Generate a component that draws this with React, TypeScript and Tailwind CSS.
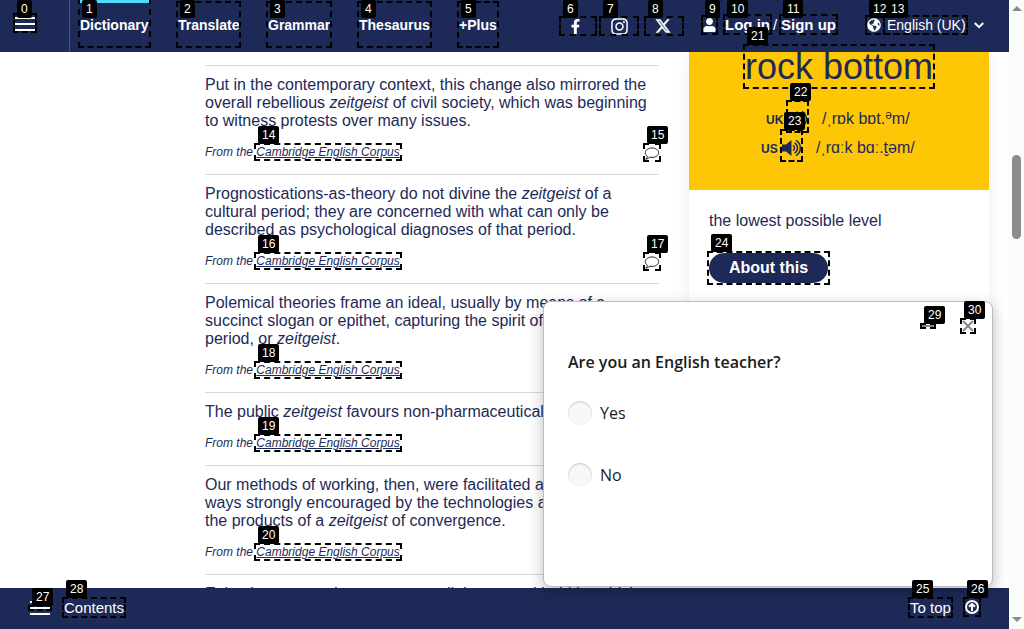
import React from "react";
import { FaFacebookF, FaGlobeAmericas, FaInstagram, FaUser } from "react-icons/fa";
import { FaXTwitter } from "react-icons/fa6";

const Z = () => <i>zeitgeist</i>;

const examples: { lines: React.ReactNode[]; comment?: boolean }[] = [
  {
    lines: [
      "Put in the contemporary context, this change also mirrored the",
      <>overall rebellious <Z /> of civil society, which was beginning</>,
      "to witness protests over many issues.",
    ],
    comment: true,
  },
  {
    lines: [
      <>Prognostications-as-theory do not divine the <Z /> of a</>,
      "cultural period; they are concerned with what can only be",
      "described as psychological diagnoses of that period.",
    ],
    comment: true,
  },
  {
    lines: [
      "Polemical theories frame an ideal, usually by means of a",
      "succinct slogan or epithet, capturing the spirit of the",
      <>period, or <Z />.</>,
    ],
  },
  { lines: [<>The public <Z /> favours non-pharmaceutical</>] },
  {
    lines: [
      "Our methods of working, then, were facilitated and in some",
      "ways strongly encouraged by the technologies and",
      <>the products of a <Z /> of convergence.</>,
    ],
  },
  { lines: ["Episodes are used as a means to link past and held by which"] },
];

// [label, x, y, width, height, label y]
const markers: [string, number, number, number, number, number][] = [
  ["0", 13, 13, 24, 20, 0],
  ["1", 78, -2, 73, 50, 0],
  ["2", 176, 1, 65, 47, 0],
  ["3", 266, 1, 66, 47, 0],
  ["4", 357, 1, 75, 47, 0],
  ["5", 457, 1, 42, 47, 0],
  ["6", 559, 16, 38, 20, 0],
  ["7", 599, 16, 40, 20, 0],
  ["8", 644, 16, 40, 20, 0],
  ["9", 701, 15, 17, 20, 0],
  ["10", 723, 14, 49, 21, 0],
  ["11", 779, 14, 59, 21, 0],
  ["12", 865, 15, 103, 20, 0],
  ["13", 883, 15, 85, 20, 0],
  ["14", 254, 143, 148, 18, 126],
  ["15", 643, 143, 18, 19, 126],
  ["16", 254, 252, 148, 18, 235],
  ["17", 643, 252, 18, 19, 235],
  ["18", 254, 361, 148, 18, 344],
  ["19", 254, 434, 148, 18, 417],
  ["20", 254, 543, 148, 18, 526],
  ["21", 743, 44, 192, 45, 27],
  ["22", 786, 100, 23, 33, 83],
  ["23", 780, 129, 23, 33, 112],
  ["24", 707, 251, 123, 34, 234],
  ["25", 908, 597, 45, 21, 580],
  ["26", 963, 597, 18, 20, 580],
  ["27", 28, 605, 24, 6, 588],
  ["28", 62, 597, 64, 21, 580],
  ["29", 920, 323, 16, 6, 306],
  ["30", 960, 318, 16, 16, 301],
];

function Speaker() {
  return (
    <svg width="20" height="18" viewBox="0 0 20 18" fill="none" stroke="#1d2a57" strokeWidth="1.5">
      <path d="M0 5.500h4L9.500 1v16L4 12.500H0z" fill="#1d2a57" stroke="none" />
      <path d="M11 6.300a3.200 3.200 0 0 1 0 5.400M12.500 3.800a6 6 0 0 1 0 10.400M14 1.300a9 9 0 0 1 0 15.400" />
    </svg>
  );
}

function Bubble() {
  return (
    <svg width="16" height="14" viewBox="0 0 16 14" fill="white" stroke="#222" strokeWidth="1">
      <path d="M8 2c3.800 0 6.700 2.100 6.700 4.700S11.800 11.400 8 11.400c-.9 0-1.700-.1-2.500-.3C4.600 12.300 3.400 13 1.800 13.200c.9-.9 1.500-1.800 1.600-2.900C2.100 9.500 1.300 8.200 1.300 6.700 1.300 4.100 4.200 2 8 2z" />
    </svg>
  );
}

function Bars({ className }: { className: string }) {
  return (
    <span className={`flex flex-col gap-1 ${className}`}>
      <span className="h-[2px] w-5 bg-white" />
      <span className="h-[2px] w-5 bg-white" />
      <span className="h-[2px] w-5 bg-white" />
    </span>
  );
}

function Header() {
  return (
    <header className="relative z-10 flex h-[52px] shrink-0 bg-[#1d2a57] text-[15px] leading-[18px] text-white">
      <div className="w-[70px] border-r border-[#4a557b] pt-[17px] pl-[15px]">
        <Bars className="" />
      </div>
      <nav className="flex w-[489px] pl-[10px] text-[14px] leading-[50px] font-bold">
        <a className="w-[98px] shrink-0">
          <span className="block h-[50px] w-[69px] bg-[linear-gradient(#4fdcff_3px,transparent_3px)]">Dictionary</span>
        </a>
        <a className="w-[90px] shrink-0">Translate</a>
        <a className="w-[91px] shrink-0">Grammar</a>
        <a className="w-[100px] shrink-0">Thesaurus</a>
        <a className="shrink-0">+Plus</a>
      </nav>
      <div className="flex h-[52px] w-[144px] items-center">
        <FaFacebookF className="ml-[9px] size-[15px]" />
        <FaInstagram className="ml-[27px] size-[19px]" />
        <FaXTwitter className="ml-[26px] size-4 stroke-white stroke-[16px]" />
      </div>
      <div className="flex h-[50px] items-center">
        <FaUser className="h-[14px] w-[13px]" />
        <b className="ml-[9px] w-[45px] whitespace-nowrap">Log in</b>
        <span className="ml-[3px] w-[8px]">/</span>
        <b className="w-[55px] whitespace-nowrap">Sign up</b>
        <FaGlobeAmericas className="ml-[31px] size-[14px]" />
        <span className="ml-[6px] w-[79px] text-[14px] whitespace-nowrap">English (UK)</span>
        <svg className="ml-2" width="10" height="7" viewBox="0 0 10 7" fill="none" stroke="white" strokeWidth="2">
          <path d="M.8 1 5 5.200 9.200 1" />
        </svg>
      </div>
    </header>
  );
}

function Survey() {
  return (
    <section className="absolute top-[301px] left-[543px] z-20 h-[286px] w-[450px] rounded-lg border border-[#bbb] bg-white pl-6 font-['Open_Sans',sans-serif] text-[16px] leading-[22px] text-[#1c1c1c] shadow-[0_5px_15px_rgba(0,0,0,0.25)]">
      <div className="flex h-[49px] pl-[354px]">
        <span className="mt-[23px] h-[2px] w-3 bg-[#888]" />
        <svg className="mt-[18px] ml-7" width="12" height="12" viewBox="0 0 12 12" stroke="#888" strokeWidth="2">
          <path d="M1 1l10 10M11 1L1 11" />
        </svg>
      </div>
      <h2 className="mb-[28px] font-semibold">Are you an English teacher?</h2>
      {["Yes", "No"].map((t) => (
        <label key={t} className="mb-[38px] flex h-6 items-center gap-2">
          <span className="size-6 rounded-full bg-[#f8f8f8] shadow-[inset_0_1px_2px_rgba(0,0,0,0.2)]" />
          {t}
        </label>
      ))}
    </section>
  );
}

export default function App() {
  return (
    <div className="relative flex h-[629px] w-[1024px] overflow-hidden bg-white font-['Liberation_Sans',Arial,sans-serif] text-[#1d2a57]">
      <div className="flex w-[1009px] flex-col">
        <Header />
        <main className="flex h-[536px] overflow-hidden pl-[205px]">
          <div className="w-[454px] shrink-0 pt-[13px]">
            {examples.map((e, i) => (
              <article key={i} className="border-t border-[#d8d8d8] pt-[10px] pb-[13px] text-[16px] leading-[18px] whitespace-nowrap">
                {e.lines.map((l, j) => (
                  <p key={j}>{l}</p>
                ))}
                <div className="mt-[13px] flex h-[18px] justify-between text-[12px] italic">
                  <p>
                    From the <a className="underline">Cambridge English Corpus</a>
                  </p>
                  {e.comment && (
                    <span className="mt-[3px] -mr-px">
                      <Bubble />
                    </span>
                  )}
                </div>
              </article>
            ))}
          </div>
          <aside className="ml-[30px] w-[300px] shrink-0 bg-white shadow-[0_0_16px_rgba(0,0,0,0.07)]">
            <div className="h-[138px] bg-[#fec706] text-center">
              <h2 className="h-[52px] text-[36px] leading-[30px]">rock bottom</h2>
              <p className="flex h-[29px] items-center pl-[77px] text-[16px] whitespace-nowrap">
                <b className="w-[22px] pt-[2px] text-left text-[12px]">UK</b>
                <Speaker />
                <span className="ml-[14px]">
                  /ˌrɒk bɒt.<span className="relative -top-[5px] text-[12px]">ə</span>m/
                </span>
              </p>
              <p className="flex h-[29px] items-center pl-[72px] text-[16px] whitespace-nowrap">
                <b className="w-[21px] pt-[2px] text-left text-[12px]">US</b>
                <Speaker />
                <span className="ml-[14px]">/ˌrɑːk bɑː.t̬əm/</span>
              </p>
            </div>
            <div className="px-5 pt-[21px]">
              <p className="text-[16px] leading-[20px]">the lowest possible level</p>
              <button className="mt-[22px] block h-[30px] w-[119px] rounded-full bg-[#1d2a57] text-[16px] leading-[30px] font-bold text-white">
                About this
              </button>
            </div>
          </aside>
        </main>
        <footer className="relative z-10 flex h-[41px] shrink-0 bg-[#1d2a57] text-[15px] leading-[39px] text-white">
          <Bars className="mt-[13px] ml-[30px]" />
          <span className="ml-[14px] w-[846px]">Contents</span>
          <span className="w-[43px] whitespace-nowrap">To top</span>
          <svg className="mt-3 ml-[12px]" width="14" height="14" viewBox="0 0 14 14" fill="none" stroke="white" strokeWidth="2">
            <circle cx="7" cy="7" r="6" />
            <path d="M7 11V4M4 6.800 7 3.900l3 2.900" />
          </svg>
        </footer>
      </div>
      <div className="flex w-[15px] flex-col items-center bg-[#fbfbfb]">
        <span className="mt-[6px] border-x-[5px] border-b-[5px] border-transparent border-b-[#8b8b8b]" />
        <span className="mt-[144px] h-[84px] w-[9px] rounded-full bg-[#8b8b8b]" />
        <span className="mt-auto mb-[7px] border-x-[5px] border-t-[5px] border-transparent border-t-[#8b8b8b]" />
      </div>
      <Survey />
      <div className="absolute inset-0 z-30">
        {markers.map(([label, x, y, w, h, ly]) => (
          <React.Fragment key={label}>
            <span className="absolute border-2 border-dashed border-black" style={{ left: x, top: y, width: w, height: h }} />
            <span
              className="absolute h-[18px] rounded-[2px] bg-black px-1 text-[12px] leading-[18px] text-white"
              style={{ left: x + 4, top: ly }}
            >
              {label}
            </span>
          </React.Fragment>
        ))}
      </div>
    </div>
  );
}
